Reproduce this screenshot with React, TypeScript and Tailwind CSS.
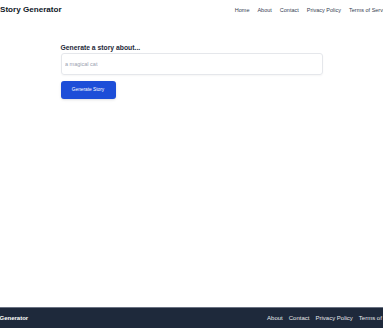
const navLinks = ["Home", "About", "Contact", "Privacy Policy", "Terms of Service"];
const footerLinks = ["About", "Contact", "Privacy Policy", "Terms of Service"];

export default function App() {
  return (
    <div className="flex min-h-screen w-full flex-col overflow-hidden bg-white font-['Liberation_Sans',Arial,sans-serif] text-gray-800">
      <header className="flex h-[20px] w-[390px] shrink-0 items-baseline pt-[6px]">
        <div className="text-[8.1px] font-bold leading-none text-gray-900">Story Generator</div>
        <nav className="ml-auto flex items-baseline gap-[8px] text-[5.5px] leading-none text-gray-700">
          {navLinks.map((l) => (
            <a key={l} className="whitespace-nowrap">
              {l}
            </a>
          ))}
        </nav>
      </header>

      <main className="flex-1 pt-[25px]">
        <div className="mx-auto w-[262px]">
          <h2 className="mb-[1.5px] text-[6.8px] font-bold leading-none text-gray-800">
            Generate a story about...
          </h2>
          <input
            type="text"
            placeholder="a magical cat"
            className="block h-[22px] w-full rounded-[3px] border border-gray-200 pl-[3.5px] text-[5.5px] text-gray-700 shadow-[0_1px_2px_rgba(0,0,0,0.04)] outline-none placeholder:text-gray-400"
          />
          <button className="mt-[5.7px] flex h-[18px] w-[55px] items-center justify-center rounded-[3px] bg-[#1d4ed8] text-[4.8px] text-white shadow-sm">
            Generate Story
          </button>
        </div>
      </main>

      <footer className="flex h-[21px] shrink-0 justify-center border-t border-gray-500 bg-[#1e293b] text-white">
        <div className="flex w-[428px] shrink-0 items-center justify-between pl-[5px] pr-[2px]">
          <div className="whitespace-nowrap text-[6px] font-bold leading-none">Story Generator</div>
          <nav className="flex items-center gap-[6px] text-[6px] leading-none text-gray-200">
            {footerLinks.map((l) => (
              <a key={l} className="whitespace-nowrap">
                {l}
              </a>
            ))}
          </nav>
        </div>
      </footer>
    </div>
  );
}
